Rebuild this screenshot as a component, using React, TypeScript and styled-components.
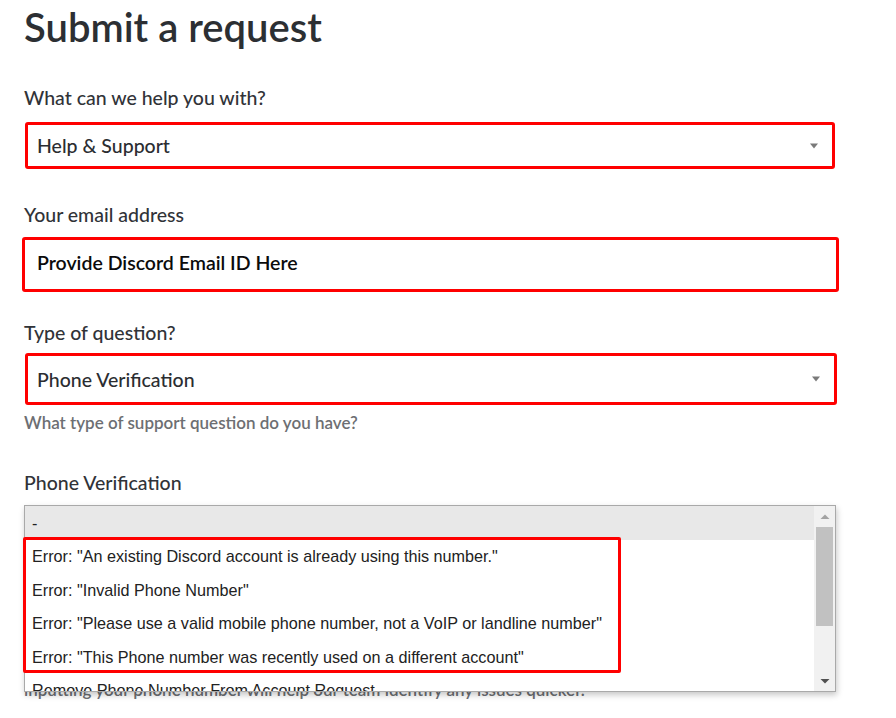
import styled, { createGlobalStyle } from "styled-components";

const GlobalStyle = createGlobalStyle`
  html, body {
    margin: 0;
    padding: 0;
    background: #ffffff;
  }
  body {
    font-family: Lato, "Noto Sans", sans-serif;
  }
  * {
    box-sizing: border-box;
  }
`;

const Page = styled.div`
  width: 896px;
  height: 718px;
  overflow: hidden;
  padding: 3px 0 0 24px;
`;

const Title = styled.h1`
  margin: 0;
  font-size: 40px;
  line-height: 48px;
  font-weight: 600;
  color: #2c2f33;
`;

const Field = styled.div<{ $mt: number }>`
  margin-top: ${(p) => p.$mt}px;
`;

const Label = styled.div`
  font-size: 19.5px;
  line-height: 24px;
  font-weight: 500;
  color: #313338;
`;

const Box = styled.div<{ $mt: number; $h: number; $x: number; $w: number; $strong?: boolean }>`
  margin-top: ${(p) => p.$mt}px;
  margin-left: ${(p) => p.$x}px;
  width: ${(p) => p.$w}px;
  height: ${(p) => p.$h}px;
  border: 3px solid #ff0000;
  border-radius: 3px;
  display: flex;
  align-items: center;
  justify-content: space-between;
  padding: 0 14px ${(p) => (p.$strong ? 4 : 0)}px ${(p) => 13 - p.$x - 3}px;
  font-size: 19.5px;
  font-weight: ${(p) => (p.$strong ? 600 : 500)};
  color: ${(p) => (p.$strong ? "#0b0b0b" : "#2b2d31")};
`;

const Caret = styled.svg`
  width: 8px;
  height: 6px;
  flex: none;
`;

const Hint = styled.div<{ $mt: number }>`
  margin-top: ${(p) => p.$mt}px;
  font-size: 17px;
  line-height: 22px;
  font-weight: 600;
  color: #6d6f73;
  white-space: nowrap;
`;

const Combo = styled.div`
  position: relative;
  margin-top: 10px;
  width: 812px;
`;

const ClosedSelect = styled.div`
  height: 48px;
  border: 1px solid #c4c4c4;
  border-radius: 3px;
`;

const Listbox = styled.div`
  position: absolute;
  top: 0;
  left: 0;
  width: 812px;
  height: 187px;
  display: flex;
  background: #ffffff;
  border: 1px solid #a9a9a9;
  box-shadow: 1px 3px 6px rgba(0, 0, 0, 0.22);
  overflow: hidden;
  z-index: 1;
`;

const Options = styled.div`
  flex: 1;
  min-width: 0;
`;

const Option = styled.div<{ $active?: boolean }>`
  height: 33.5px;
  display: flex;
  align-items: center;
  padding: 0 7px;
  line-height: 18px;
  font-family: "Liberation Sans", Arial, sans-serif;
  font-size: 16.2px;
  color: #222222;
  white-space: nowrap;
  background: ${(p) => (p.$active ? "#e8e8e8" : "transparent")};
`;

const Scrollbar = styled.div`
  width: 21px;
  flex: none;
  background: #f1f1f1;
  display: flex;
  flex-direction: column;
`;

const ScrollButton = styled.div`
  height: 21px;
  flex: none;
  display: flex;
  align-items: center;
  justify-content: center;
`;

const Thumb = styled.div`
  height: 99px;
  margin: 0 2px 0 2px;
  background: #c1c1c1;
`;

const Track = styled.div`
  flex: 1;
`;

const Highlight = styled.div`
  position: absolute;
  left: -1px;
  top: 32px;
  width: 598px;
  height: 136px;
  border: 3px solid #ff0000;
  border-radius: 2px;
  pointer-events: none;
  z-index: 2;
`;

const DownCaret = () => (
  <Caret viewBox="0 0 8 6">
    <path d="M0 0.5 H8 L4 5.5 Z" fill="#7a7a7a" />
  </Caret>
);

const options = [
  'Error: "An existing Discord account is already using this number."',
  'Error: "Invalid Phone Number"',
  'Error: "Please use a valid mobile phone number, not a VoIP or landline number"',
  'Error: "This Phone number was recently used on a different account"',
  "Remove Phone Number From Account Request",
  "Other",
];

export default function App() {
  return (
    <Page>
      <GlobalStyle />
      <Title>Submit a request</Title>

      <Field $mt={35}>
        <Label>What can we help you with?</Label>
        <Box $mt={12} $h={47} $x={1} $w={810}>
          Help &amp; Support
          <DownCaret />
        </Box>
      </Field>

      <Field $mt={34}>
        <Label>Your email address</Label>
        <Box $mt={10} $h={55} $x={-2} $w={817} $strong>
          Provide Discord Email ID Here
        </Box>
      </Field>

      <Field $mt={29}>
        <Label>Type of question?</Label>
        <Box $mt={8} $h={52} $x={1} $w={812}>
          Phone Verification
          <DownCaret />
        </Box>
        <Hint $mt={7}>What type of support question do you have?</Hint>
      </Field>

      <Field $mt={37}>
        <Label>Phone Verification</Label>
        <Combo>
          <ClosedSelect />
          <Hint $mt={126}>
            inputting your phone number will help our team identify any issues quicker.
          </Hint>
          <Listbox>
            <Options>
              <Option $active>-</Option>
              {options.map((o) => (
                <Option key={o}>{o}</Option>
              ))}
            </Options>
            <Scrollbar>
              <ScrollButton>
                <svg width="10" height="6" viewBox="0 0 10 6">
                  <path d="M0.5 5 L5 0.5 L9.5 5 Z" fill="#a3a3a3" />
                </svg>
              </ScrollButton>
              <Thumb />
              <Track />
              <ScrollButton>
                <svg width="10" height="6" viewBox="0 0 10 6">
                  <path d="M0.5 1 L9.5 1 L5 5.5 Z" fill="#505050" />
                </svg>
              </ScrollButton>
            </Scrollbar>
          </Listbox>
          <Highlight />
        </Combo>
      </Field>
    </Page>
  );
}
